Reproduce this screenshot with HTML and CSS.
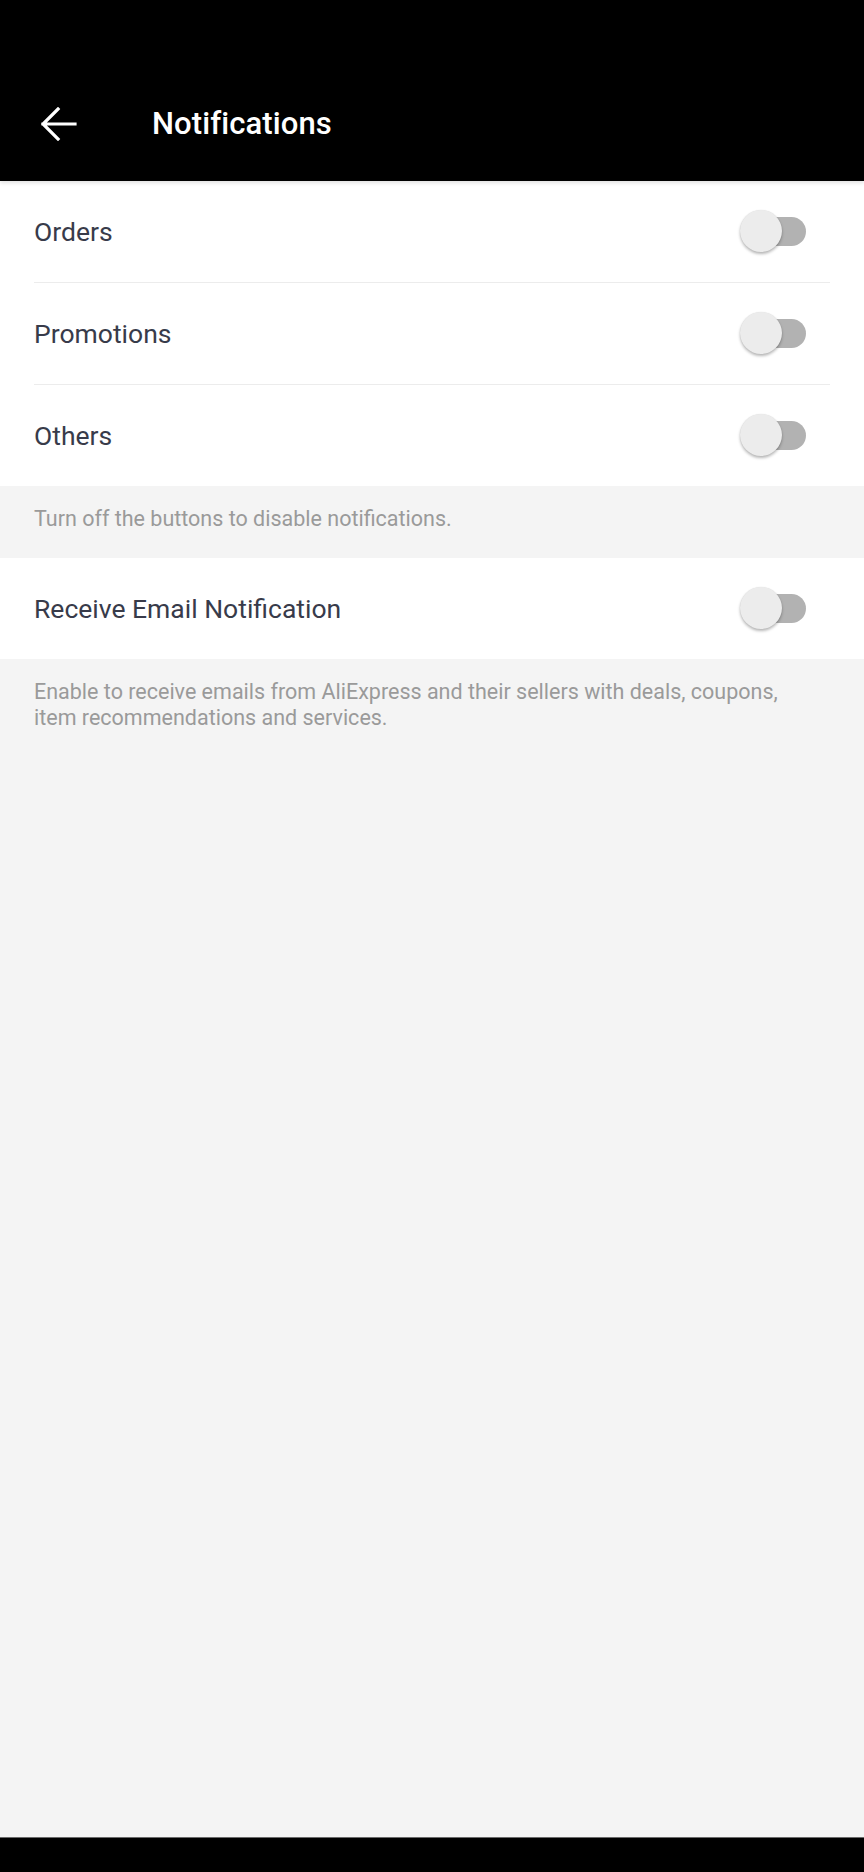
FILE: index.html
```html
<!DOCTYPE html>
<html>
<head>
<meta charset="utf-8">
<meta name="viewport" content="width=device-width,initial-scale=1.0">
<title>Notifications</title>
<link rel="stylesheet" href="styles.css">
</head>
<body>

<div class="app">
  <header class="topbar">
    <a class="back">
      <svg width="36" height="34" viewBox="0 0 36 34">
        <path d="M2 17 H34 M17 2 L2 17 L17 32" fill="none" stroke="#fff" stroke-width="3.2" stroke-linecap="square"/>
      </svg>
    </a>
    <h1>Notifications</h1>
  </header>

  <section class="group">
    <div class="row">
      <span class="label">Orders</span>
      <span class="switch"><span class="knob"></span></span>
    </div>
    <div class="row">
      <span class="label">Promotions</span>
      <span class="switch"><span class="knob"></span></span>
    </div>
    <div class="row">
      <span class="label">Others</span>
      <span class="switch"><span class="knob"></span></span>
    </div>
  </section>
  <p class="hint">Turn off the buttons to disable notifications.</p>

  <section class="group">
    <div class="row">
      <span class="label">Receive Email Notification</span>
      <span class="switch"><span class="knob"></span></span>
    </div>
  </section>
  <p class="hint multi">Enable to receive emails from AliExpress and their sellers with deals, coupons, item recommendations and services.</p>

  <div class="spacer"></div>
  <footer class="navbar"></footer>
</div>

</body>
</html>
```

FILE: styles.css
```css
html, body {
  margin: 0;
  padding: 0;
}
body {
  font-family: Roboto, "Liberation Sans", sans-serif;
  background-color: #f4f4f4;
}
.app {
  display: flex;
  flex-direction: column;
  height: 1872px;
}
.topbar {
  position: relative;
  z-index: 1;
  display: flex;
  align-items: center;
  height: 181px;
  padding: 66px 0 0 0;
  box-sizing: border-box;
  background-color: #000;
  box-shadow: 0 2px 4px rgba(0, 0, 0, .12);
}
.topbar > .back {
  display: flex;
  margin: 0 0 0 41px;
  width: 36px;
}
.topbar > h1 {
  margin: 0 0 0 75px;
  padding: 0;
  color: #fff;
  font-size: 31px;
  font-weight: 500;
  letter-spacing: .1px;
}
.group {
  background-color: #fff;
}
.row {
  display: flex;
  align-items: center;
  justify-content: space-between;
  margin: 0 34px 0 34px;
  height: 101px;
  border-bottom: 1px solid #ececec;
}
.row:last-child {
  border-bottom: none;
}
.row > .label {
  color: #383b4a;
  font-size: 26.5px;
}
.switch {
  position: relative;
  display: block;
  margin: 0 24px 0 0;
  width: 62px;
  height: 29px;
  border-radius: 15px;
  background-color: #b2b2b2;
}
.switch > .knob {
  position: absolute;
  left: -4px;
  top: -7px;
  width: 42px;
  height: 42px;
  border-radius: 50%;
  background-color: #ececec;
  box-shadow: 0 2px 3px rgba(0, 0, 0, .28), 0 0 1px rgba(0, 0, 0, .12);
}
.hint {
  margin: 0;
  padding: 20px 34px 26px 34px;
  color: #9a9a9a;
  font-size: 21.5px;
  line-height: 26px;
}
.hint.multi {
  padding: 20px 60px 20px 34px;
}
.spacer {
  flex: 1;
}
.navbar {
  height: 34px;
  background-color: #000;
  border-top: 1px solid #6a6a6a;
}
```
